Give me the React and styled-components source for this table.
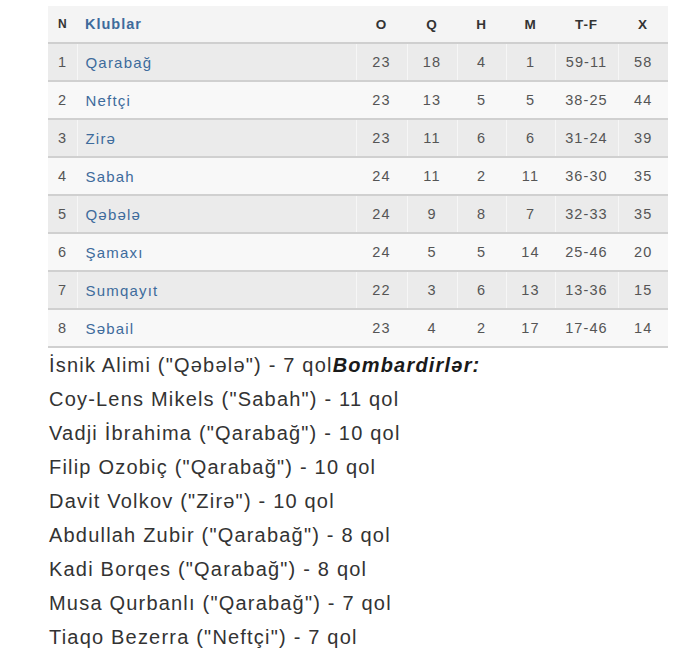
import React from "react";
import styled, { createGlobalStyle } from "styled-components";

const Global = createGlobalStyle`
  html, body { margin: 0; padding: 0; background: #ffffff; }
  body { font-family: "Liberation Sans", Arial, sans-serif; }
`;

const Page = styled.div`
  padding: 6px 0 0 48px;
  width: 652px;
`;

const Table = styled.table`
  width: 620px;
  border-collapse: collapse;
  table-layout: fixed;
  font-family: "Liberation Sans", Arial, sans-serif;
`;

const HeadRow = styled.tr`
  background: #f4f4f4;
  height: 37px;
  border-bottom: 2px solid #cfcfcf;
`;

const Th = styled.th`
  padding: 0;
  font-weight: bold;
  font-size: ${(p) => (p.$small ? "12px" : p.$link ? "14.5px" : "13.5px")};
  letter-spacing: 1px;
  color: ${(p) => (p.$link ? "#3e6b9c" : "#333")};
  text-align: ${(p) => (p.$first || p.$left ? "left" : "center")};
  padding-left: ${(p) => (p.$left ? "8px" : p.$first ? "10px" : "0")};
`;

const Row = styled.tr`
  background: ${(p) => (p.$odd ? "#ebebeb" : "#f8f8f8")};
  height: 38px;
  border-bottom: 2px solid #d0d0d0;
`;

const Td = styled.td`
  padding: 0;
  font-size: 14.5px;
  letter-spacing: 1.1px;
  color: #555;
  text-align: center;
  border-left: 1px solid ${(p) => (p.$odd ? "#f6f6f6" : "#f8f8f8")};
  &:first-child {
    border-left: none;
    text-align: left;
    padding-left: 10px;
  }
`;

const ClubCell = styled(Td)`
  text-align: left;
  padding-left: 8px;
  color: #3e6b9c;
  font-size: 15px;
  letter-spacing: 1.2px;
`;

const Scorers = styled.div`
  font-family: "Liberation Sans", Arial, sans-serif;
  font-size: 20px;
  letter-spacing: 1.2px;
  line-height: 34px;
  color: #333;
  margin-top: 0;
  padding-left: 1px;
`;

const Line = styled.div`
  white-space: nowrap;
`;

const Bold = styled.b`
  font-style: italic;
  font-weight: bold;
  color: #1a1a1a;
`;

const cols = [29, 279, 51, 50, 49, 49, 63, 50];

const rows = [
  [1, "Qarabağ", 23, 18, 4, 1, "59-11", 58],
  [2, "Neftçi", 23, 13, 5, 5, "38-25", 44],
  [3, "Zirə", 23, 11, 6, 6, "31-24", 39],
  [4, "Sabah", 24, 11, 2, 11, "36-30", 35],
  [5, "Qəbələ", 24, 9, 8, 7, "32-33", 35],
  [6, "Şamaxı", 24, 5, 5, 14, "25-46", 20],
  [7, "Sumqayıt", 22, 3, 6, 13, "13-36", 15],
  [8, "Səbail", 23, 4, 2, 17, "17-46", 14],
];

const scorers = [
  'Coy-Lens Mikels ("Sabah") - 11 qol',
  'Vadji İbrahima ("Qarabağ") - 10 qol',
  'Filip Ozobiç ("Qarabağ") - 10 qol',
  'Davit Volkov ("Zirə") - 10 qol',
  'Abdullah Zubir ("Qarabağ") - 8 qol',
  'Kadi Borqes ("Qarabağ") - 8 qol',
  'Musa Qurbanlı ("Qarabağ") - 7 qol',
  'Tiaqo Bezerra ("Neftçi") - 7 qol',
];

export default function App() {
  return (
    <>
      <Global />
      <Page>
        <Table>
          <colgroup>
            {cols.map((w, i) => (
              <col key={i} style={{ width: w }} />
            ))}
          </colgroup>
          <thead>
            <HeadRow>
              <Th $small $first>N</Th>
              <Th $link $left>Klublar</Th>
              <Th>O</Th>
              <Th>Q</Th>
              <Th>H</Th>
              <Th>M</Th>
              <Th>T-F</Th>
              <Th>X</Th>
            </HeadRow>
          </thead>
          <tbody>
            {rows.map((r, i) => {
              const odd = i % 2 === 0;
              return (
                <Row key={r[0]} $odd={odd}>
                  <Td $odd={odd}>{r[0]}</Td>
                  <ClubCell $odd={odd}>{r[1]}</ClubCell>
                  {r.slice(2).map((v, j) => (
                    <Td key={j} $odd={odd}>{v}</Td>
                  ))}
                </Row>
              );
            })}
          </tbody>
        </Table>
        <Scorers>
          <Line>
            İsnik Alimi ("Qəbələ") - 7 qol<Bold>Bombardirlər:</Bold>
          </Line>
          {scorers.map((s) => (
            <Line key={s}>{s}</Line>
          ))}
        </Scorers>
      </Page>
    </>
  );
}
